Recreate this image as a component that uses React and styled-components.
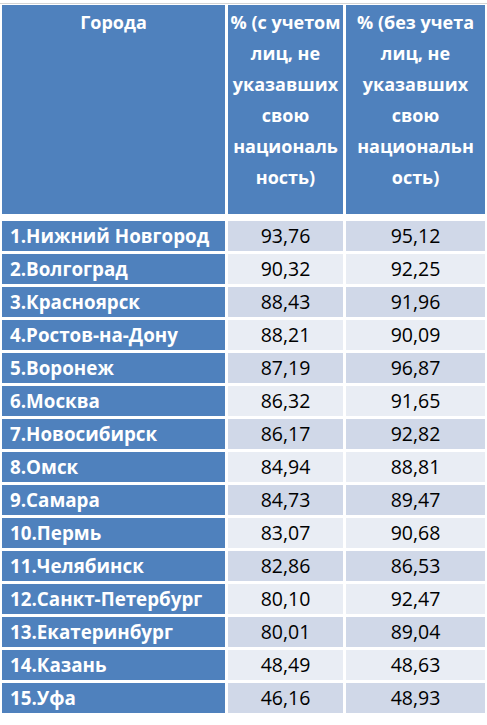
import React from 'react';
import styled, { createGlobalStyle } from 'styled-components';

const rows = [
    ['1.Нижний Новгород', '93,76', '95,12'],
    ['2.Волгоград', '90,32', '92,25'],
    ['3.Красноярск', '88,43', '91,96'],
    ['4.Ростов-на-Дону', '88,21', '90,09'],
    ['5.Воронеж', '87,19', '96,87'],
    ['6.Москва', '86,32', '91,65'],
    ['7.Новосибирск', '86,17', '92,82'],
    ['8.Омск', '84,94', '88,81'],
    ['9.Самара', '84,73', '89,47'],
    ['10.Пермь', '83,07', '90,68'],
    ['11.Челябинск', '82,86', '86,53'],
    ['12.Санкт-Петербург', '80,10', '92,47'],
    ['13.Екатеринбург', '80,01', '89,04'],
    ['14.Казань', '48,49', '48,63'],
    ['15.Уфа', '46,16', '48,93'],
];

const GlobalStyle = createGlobalStyle`
    body {
        margin: 0;
        background: #ffffff;
        font-family: 'Open Sans', 'Liberation Sans', sans-serif;
    }
`;

const Page = styled.div`
    width: 487px;
    height: 725px;
    border-top: 1px solid #d4d4d4;
    margin-top: 3px;
    padding: 1px 2px 0 2px;
    box-sizing: border-box;
`;

const Grid = styled.div`
    display: grid;
    grid-template-columns: 223px 115px 139px;
    column-gap: 3px;
`;

const HeaderRow = styled(Grid)`
    height: 209px;
`;

const HeadCell = styled.div`
    background: #4f81bd;
    color: #ffffff;
    font-weight: 700;
    font-size: 18px;
    line-height: 31px;
    text-align: center;
    padding-top: 2px;
    box-sizing: border-box;
    white-space: nowrap;
`;

const Body = styled.div`
    display: flex;
    flex-direction: column;
    gap: 3px;
    margin-top: 6.5px;
`;

const Row = styled(Grid)`
    height: 30px;
`;

const CityCell = styled.div`
    background: #4f81bd;
    color: #ffffff;
    font-weight: 700;
    font-size: 18.8px;
    display: flex;
    align-items: center;
    padding-left: 8px;
    white-space: nowrap;
`;

const ValueCell = styled.div`
    background: ${(props) => (props.$odd ? '#d0d8e8' : '#e9edf4')};
    color: #000000;
    font-size: 19.5px;
    display: flex;
    align-items: center;
    justify-content: center;
`;

const App = () => {
    return (
        <Page>
            <GlobalStyle />
            <HeaderRow>
                <HeadCell>Города</HeadCell>
                <HeadCell>
                    % (с учетом<br />лиц, не<br />указавших<br />свою<br />националь<br />ность)
                </HeadCell>
                <HeadCell>
                    % (без учета<br />лиц, не<br />указавших<br />свою<br />национальн<br />ость)
                </HeadCell>
            </HeaderRow>
            <Body>
                {rows.map(([city, a, b], i) => (
                    <Row key={city}>
                        <CityCell>{city}</CityCell>
                        <ValueCell $odd={i % 2 === 0}>{a}</ValueCell>
                        <ValueCell $odd={i % 2 === 0}>{b}</ValueCell>
                    </Row>
                ))}
            </Body>
        </Page>
    );
};

export default App;
